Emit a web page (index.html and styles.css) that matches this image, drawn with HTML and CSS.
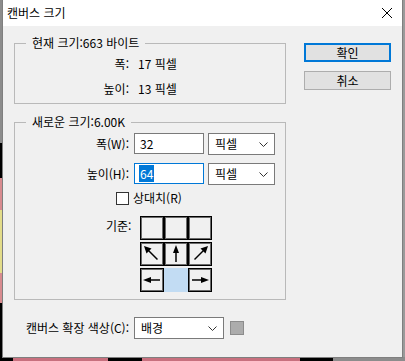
FILE: index.html
```html
<!DOCTYPE html>
<html lang="ko">
<head>
<meta charset="utf-8">
<title>캔버스 크기</title>
<link rel="stylesheet" href="styles.css">
</head>
<body>
<div class="window">
  <div class="titlebar">
    <span class="title">캔버스 크기</span>
    <svg class="close" width="12" height="12" viewBox="0 0 12 12"><path d="M1 1L11 11M11 1L1 11" stroke="#000" stroke-width="1" fill="none"/></svg>
  </div>
  <div class="content">
    <div class="main">
      <fieldset class="group g-current">
        <legend>현재 크기:663 바이트</legend>
        <div class="info-row"><span class="lbl">폭:</span><span class="val">17 픽셀</span></div>
        <div class="info-row"><span class="lbl">높이:</span><span class="val">13 픽셀</span></div>
      </fieldset>
      <fieldset class="group g-new">
        <legend>새로운 크기:6.00K</legend>
        <div class="field-row">
          <span class="lbl">폭(W):</span>
          <div class="input">32</div>
          <div class="select unit"><span>픽셀</span><svg class="chev" width="9" height="5" viewBox="0 0 9 5"><path d="M0.5 0.5L4.5 4.5L8.5 0.5" stroke="#333" fill="none"/></svg></div>
        </div>
        <div class="field-row">
          <span class="lbl">높이(H):</span>
          <div class="input focused"><span class="sel">64</span></div>
          <div class="select unit"><span>픽셀</span><svg class="chev" width="9" height="5" viewBox="0 0 9 5"><path d="M0.5 0.5L4.5 4.5L8.5 0.5" stroke="#333" fill="none"/></svg></div>
        </div>
        <div class="check-row"><span class="checkbox"></span><span>상대치(R)</span></div>
        <div class="anchor-row">
          <span class="anchor-lbl">기준:</span>
          <div class="anchor-grid">
            <div class="cell"></div>
            <div class="cell"></div>
            <div class="cell"></div>
            <div class="cell"><svg viewBox="0 0 22 22"><path d="M16.5 16.5L6 6" stroke="#000" stroke-width="1.5"/><polygon points="3,3 10.5,5.5 5.5,10.5" fill="#000"/></svg></div>
            <div class="cell"><svg viewBox="0 0 22 22"><path d="M11 19V6" stroke="#000" stroke-width="1.5"/><polygon points="11,2 14,10 8,10" fill="#000"/></svg></div>
            <div class="cell"><svg viewBox="0 0 22 22"><path d="M5.5 16.5L16 6" stroke="#000" stroke-width="1.5"/><polygon points="19,3 11.5,5.5 16.5,10.5" fill="#000"/></svg></div>
            <div class="cell"><svg viewBox="0 0 22 22"><path d="M19 11H6" stroke="#000" stroke-width="1.5"/><polygon points="2,11 10,8 10,14" fill="#000"/></svg></div>
            <div class="cell center"></div>
            <div class="cell"><svg viewBox="0 0 22 22"><path d="M3 11H16" stroke="#000" stroke-width="1.5"/><polygon points="20,11 12,8 12,14" fill="#000"/></svg></div>
          </div>
        </div>
      </fieldset>
      <div class="ext-row">
        <span class="lbl">캔버스 확장 색상(C):</span>
        <div class="select ext"><span>배경</span><svg class="chev" width="9" height="5" viewBox="0 0 9 5"><path d="M0.5 0.5L4.5 4.5L8.5 0.5" stroke="#333" fill="none"/></svg></div>
        <span class="swatch"></span>
      </div>
    </div>
    <div class="buttons">
      <button class="btn primary">확인</button>
      <button class="btn">취소</button>
    </div>
  </div>
</div>
</body>
</html>
```

FILE: styles.css
```css
* { box-sizing: border-box; }
html, body { margin: 0; height: 100%; }
body {
  font-family: "Noto Sans CJK KR", "Noto Sans", sans-serif;
  font-size: 12px;
  line-height: 16px;
  color: #000;
  overflow: hidden;
  background:
    linear-gradient(to right, #000 0 13px, #c8707e 13px 108px, #000 108px 142px, #c8707e 142px 300px, #000 300px 333px, #8c8c8c 333px) left bottom / 100% 4px no-repeat,
    linear-gradient(to bottom, #8c8c8c 0 143px, #000 143px 178px, #d88b8f 178px 210px, #e3dc8a 210px 273px, #d88b8f 273px 303px, #000 303px) left top / 2px 100% no-repeat,
    #9a9a9a;
}
.window {
  margin-left: 2px;
  width: 401px;
  height: 358px;
  border: 1px solid #7f7f7f;
  border-top: none;
  background: #f0f0f0;
  display: flex;
  flex-direction: column;
}
.titlebar {
  height: 26px;
  flex: none;
  background: #fff;
  display: flex;
  align-items: center;
  justify-content: space-between;
  padding: 0 9px 0 4px;
}
.close { display: block; }
.content {
  display: flex;
  gap: 18px;
  padding: 9px 0 0 11px;
}
.main { width: 272px; flex: none; }
.group {
  margin: 0;
  padding: 5px 0 6px 0;
  border: 1px solid #b9b9b9;
  min-width: 0;
}
.group legend {
  margin-left: 11px;
  padding: 0 6px;
  line-height: 16px;
}
.info-row {
  display: grid;
  grid-template-columns: 114px auto;
  column-gap: 9px;
}
.info-row + .info-row { margin-top: 9px; }
.lbl { text-align: right; }
.g-new { margin-top: 10px; padding: 3px 0 7px 0; }
.field-row {
  display: flex;
  align-items: flex-start;
}
.field-row + .field-row { margin-top: 8px; }
.field-row .lbl {
  width: 114px;
  margin-right: 5px;
  line-height: 21px;
}
.input {
  width: 70px;
  height: 21px;
  border: 1px solid #7a7a7a;
  background: #fff;
  padding-left: 5px;
  line-height: 19px;
  margin-right: 4px;
}
.input.focused { border-color: #0078d7; padding-left: 4px; }
.input .sel {
  display: inline-block;
  background: #0078d7;
  color: #fff;
  padding: 0 1px;
  line-height: 17px;
  margin-top: 1px;
}
.select {
  height: 22px;
  border: 1px solid #7a7a7a;
  background: #fff;
  display: flex;
  align-items: center;
  justify-content: space-between;
  padding: 0 6px 0 6px;
}
.select.unit { width: 67px; }
.chev { display: block; }
.check-row {
  display: flex;
  align-items: center;
  margin-top: 5px;
  padding-left: 101px;
}
.checkbox {
  width: 13px;
  height: 13px;
  border: 1px solid #333;
  background: #fff;
  margin-right: 4px;
}
.anchor-row {
  display: flex;
  align-items: flex-start;
  margin-top: 10px;
  padding-left: 91px;
}
.anchor-lbl { width: 34px; margin-top: 2px; }
.anchor-grid {
  display: grid;
  grid-template-columns: repeat(3, 24px);
  grid-auto-rows: 24px;
  row-gap: 2px;
}
.cell {
  border: 1px solid #000;
  box-shadow: inset 1px 1px 0 #6a6a6a, inset -1px -1px 0 #6a6a6a;
  background: #f0f0f0;
}
.cell svg { display: block; width: 22px; height: 22px; }
.cell.center {
  border: none;
  box-shadow: none;
  background: #c2dcf3;
}
.ext-row {
  display: flex;
  align-items: center;
  margin-top: 17px;
}
.ext-row .lbl { width: 115px; margin-right: 5px; }
.select.ext { width: 90px; margin-right: 6px; }
.swatch {
  width: 14px;
  height: 14px;
  background: #acacac;
  border: 1px solid #8c8c8c;
}
.buttons {
  display: flex;
  flex-direction: column;
  gap: 9px;
  margin-top: 8px;
}
.btn {
  width: 87px;
  height: 19px;
  margin: 0;
  padding: 0;
  font: inherit;
  line-height: 15px;
  color: #000;
  background: #e1e1e1;
  border: 1px solid #adadad;
}
.btn.primary {
  border: 2px solid #0078d7;
}
```
